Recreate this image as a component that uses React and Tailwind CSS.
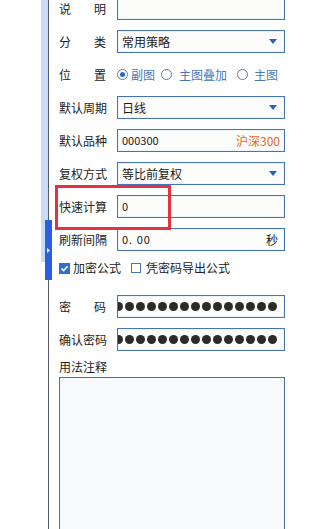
import React from "react";

const font = { fontFamily: '"Noto Sans CJK SC", "Noto Sans", sans-serif' };

function Label({ children, spread }) {
  return (
    <div
      className={`w-[58px] shrink-0 text-[12px] leading-none text-[#222] flex ${spread ? "justify-between pr-[11px]" : ""}`}
    >
      {children}
    </div>
  );
}

function Box({ children, className = "" }) {
  return (
    <div
      className={`w-[168px] h-[23px] shrink-0 border border-[#4573b4] bg-[#fcfcfa] shadow-[inset_0_0_0_1px_#e9f5fb] flex items-center px-[4px] text-[12px] text-[#1a1a1a] ${className}`}
    >
      {children}
    </div>
  );
}

function Arrow() {
  return (
    <svg width="8" height="5" viewBox="0 0 8 5" className="ml-auto mr-[3px]">
      <path d="M0 0 H8 L4 5 Z" fill="#2a62b8" />
    </svg>
  );
}

function Radio({ checked }) {
  return (
    <span className="w-[11px] h-[11px] rounded-full border border-[#5b7cb3] bg-white flex items-center justify-center shrink-0">
      {checked && <span className="w-[5px] h-[5px] rounded-full bg-[#2a64c8]" />}
    </span>
  );
}

const dots = Array.from({ length: 16 });

function Dots() {
  return (
    <div className="w-[168px] h-[23px] shrink-0 border border-[#4573b4] bg-[#fcfcfa] shadow-[inset_0_0_0_1px_#e9f5fb] flex items-center justify-end overflow-hidden pr-[7px]">
      <div className="flex items-center gap-[2px] shrink-0">
        {dots.map((_, i) => (
          <span key={i} className="w-[9px] h-[9px] rounded-full bg-[#2b2b2b] shrink-0" />
        ))}
      </div>
    </div>
  );
}

export default function App() {
  return (
    <div className="w-[309px] h-[529px] bg-white overflow-hidden flex items-start relative" style={font}>
      <div className="w-[41px] shrink-0" />
      <div className="w-[7px] h-[529px] shrink-0 flex flex-col">
        <div className="h-[262px] bg-[#c8ddf3]" />
      </div>
      <div className="w-[1px] h-[529px] shrink-0 bg-[#555b66]" />
      <div className="absolute left-[45px] top-[220px] w-[7px] h-[60px] bg-[#2b5fe0] flex items-center justify-center">
        <svg width="3" height="5" viewBox="0 0 3 5">
          <path d="M0 0 L3 2.5 L0 5 Z" fill="#fff" />
        </svg>
      </div>

      <div className="flex flex-col shrink-0 pl-[10px] mt-[-3px]">
        <div className="flex items-center">
          <Label spread><span>说</span><span>明</span></Label>
          <Box />
        </div>
        <div className="flex items-center mt-[10px]">
          <Label spread><span>分</span><span>类</span></Label>
          <Box>
            <span>常用策略</span>
            <Arrow />
          </Box>
        </div>
        <div className="flex items-center mt-[10px] h-[23px] shrink-0">
          <Label spread><span>位</span><span>置</span></Label>
          <div className="flex items-center text-[12px] text-[#4a78b8]">
            <Radio checked />
            <span className="ml-[3px]">副图</span>
            <span className="ml-[6px]"><Radio /></span>
            <span className="ml-[7px]">主图叠加</span>
            <span className="ml-[10px]"><Radio /></span>
            <span className="ml-[6px]">主图</span>
          </div>
        </div>
        <div className="flex items-center mt-[10px]">
          <Label>默认周期</Label>
          <Box>
            <span>日线</span>
            <Arrow />
          </Box>
        </div>
        <div className="flex items-center mt-[10px]">
          <Label>默认品种</Label>
          <Box>
            <span className="text-[11px]">000300</span>
            <span className="ml-auto text-[12px] text-[#e26a28]">沪深300</span>
          </Box>
        </div>
        <div className="flex items-center mt-[10px]">
          <Label>复权方式</Label>
          <Box>
            <span>等比前复权</span>
            <Arrow />
          </Box>
        </div>
        <div className="flex items-center mt-[10px] relative">
          <div className="absolute left-[-4px] top-[-10px] w-[116px] h-[45px] border-[3px] border-[#e2333f]" />
          <Label>快速计算</Label>
          <Box>
            <span className="text-[11px]">0</span>
          </Box>
        </div>
        <div className="flex items-center mt-[10px]">
          <Label>刷新间隔</Label>
          <Box>
            <span className="text-[11px] tracking-[1px]">0. 00</span>
            <span className="ml-auto mr-[2px]">秒</span>
          </Box>
        </div>
        <div className="flex items-center mt-[6px] h-[22px] shrink-0 text-[12px] text-[#222]">
          <span className="w-[11px] h-[11px] bg-[#2f6fd3] flex items-center justify-center">
            <svg width="9" height="9" viewBox="0 0 9 9">
              <path d="M1.5 4.5 L3.6 6.6 L7.6 2.2" stroke="#fff" strokeWidth="1.6" fill="none" />
            </svg>
          </span>
          <span className="ml-[3px]">加密公式</span>
          <span className="ml-[10px] w-[10px] h-[10px] border border-[#4573b4] bg-white" />
          <span className="ml-[5px]">凭密码导出公式</span>
        </div>
        <div className="flex items-center mt-[16px]">
          <Label spread><span>密</span><span>码</span></Label>
          <Dots />
        </div>
        <div className="flex items-center mt-[10px]">
          <Label>确认密码</Label>
          <Dots />
        </div>
        <div className="mt-[10px] text-[12px] leading-none text-[#222]">用法注释</div>
        <div className="mt-[4px] w-[226px] h-[200px] shrink-0 border border-[#4573b4] bg-[#f9fafb] shadow-[inset_0_0_0_1px_#eef8fc]" />
      </div>
    </div>
  );
}
